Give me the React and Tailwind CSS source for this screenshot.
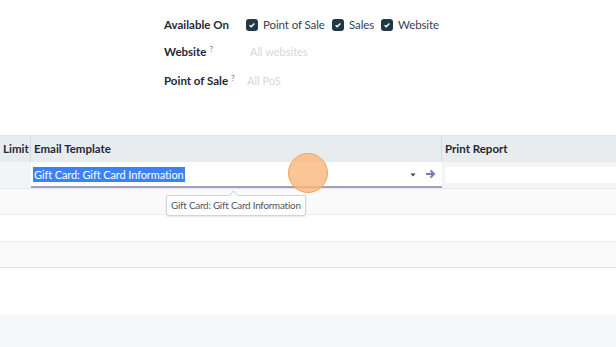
const font = { fontFamily: 'Lato, "Noto Sans", sans-serif' };

function Check({ label, w }) {
  return (
    <div className={`flex items-center gap-[5px] ${w}`}>
      <span className="flex h-[12px] w-[12px] items-center justify-center rounded-[3px] bg-[#1f3a45]">
        <svg width="8" height="8" viewBox="0 0 8 8">
          <path d="M1.6 4.2 L3.2 5.7 L6.4 2.4" fill="none" stroke="white" strokeWidth="1.4" />
        </svg>
      </span>
      <span className="text-[11.5px] tracking-[-0.1px] text-[#374151]">{label}</span>
    </div>
  );
}

export default function App() {
  return (
    <div className="relative h-[347px] w-[616px] overflow-hidden bg-white" style={font}>
      {/* form fields */}
      <div className="h-[135px] pl-[164px] pt-[15px] text-[11.5px]">
        <div className="flex h-[19px] items-center">
          <span className="w-[82px] font-bold text-[#1f2937]">Available On</span>
          <div className="flex items-center">
            <Check label="Point of Sale" w="w-[86px]" />
            <Check label="Sales" w="w-[49px]" />
            <Check label="Website" w="" />
          </div>
        </div>
        <div className="mt-[8px] flex h-[20px] items-center">
          <span className="w-[86px] font-bold text-[#1f2937]">
            Website<sup className="ml-[3px] text-[8px] font-normal text-[#6b7280]">?</sup>
          </span>
          <span className="text-[11px] text-[#d4d7dc]">All websites</span>
        </div>
        <div className="mt-[9px] flex h-[20px] items-center">
          <span className="w-[83px] font-bold text-[#1f2937]">
            Point of Sale<sup className="ml-[3px] text-[8px] font-normal text-[#6b7280]">?</sup>
          </span>
          <span className="text-[11px] text-[#d4d7dc]">All PoS</span>
        </div>
      </div>

      {/* table header */}
      <div className="flex h-[27px] border-t border-[#e5e7eb] bg-[#e9ecef] text-[11.5px] font-bold text-[#1f2937]">
        <div className="flex w-[31px] items-center border-r border-[#d6d9dd] pl-[3px]">Limit</div>
        <div className="flex w-[411px] items-center border-r border-[#d6d9dd] pl-[3px]">Email Template</div>
        <div className="flex flex-1 items-center pl-[3px]">Print Report</div>
      </div>

      {/* editing row */}
      <div className="flex h-[27px] border-b border-[#e5e7eb] bg-[#f3f4f6]">
        <div className="w-[31px]" />
        <div className="flex w-[411px] items-center border-b-2 border-[#a3a0c4] bg-white pl-[2px] pr-[6px]">
          <span className="bg-[#3b82f6] px-[1px] text-[11px] leading-[15px] tracking-[-0.1px] text-white">Gift Card: Gift Card Information</span>
          <span className="flex-1" />
          <svg width="8" height="6" viewBox="0 0 8 6" className="mr-[8px] mt-[2px]">
            <path d="M1.5 1.5 L6.5 1.5 L4 4.5 Z" fill="#374151" />
          </svg>
          <svg width="11" height="10" viewBox="0 0 11 10">
            <path d="M1 5 H9 M5.5 1.5 L9 5 L5.5 8.5" fill="none" stroke="#7c7bad" strokeWidth="2" />
          </svg>
        </div>
        <div className="flex flex-1 items-center pl-[3px]">
          <div className="h-[16px] w-full bg-white" />
        </div>
      </div>

      {/* remaining rows */}
      <div className="h-[26px] border-b border-[#ececec] bg-[#fafafa]" />
      <div className="h-[27px] border-b border-[#ececec] bg-white" />
      <div className="h-[26px] border-b border-[#e5e7eb] bg-[#fafafa]" />
      <div className="h-[47px] bg-white shadow-[0_1px_3px_rgba(0,0,0,0.12)]" />
      <div className="h-[32px] bg-[#f6f7f9]" />

      {/* tooltip */}
      <div className="absolute left-[166px] top-[195px] whitespace-nowrap rounded-[2px] border border-[#d1d5db] bg-white px-[4px] py-[3px] text-[9.8px] leading-[13px] tracking-[-0.2px] text-[#4b5563] shadow-[0_1px_2px_rgba(0,0,0,0.1)]">
        Gift Card: Gift Card Information
        <span className="absolute -top-[4px] left-[63px] h-[7px] w-[7px] rotate-45 border-l border-t border-[#d1d5db] bg-white" />
      </div>

      {/* click marker */}
      <div className="absolute left-[288px] top-[153px] h-[40px] w-[40px] rounded-full border-[1.5px] border-[#f6a35c] bg-[#fbb67a]/80" />
    </div>
  );
}
